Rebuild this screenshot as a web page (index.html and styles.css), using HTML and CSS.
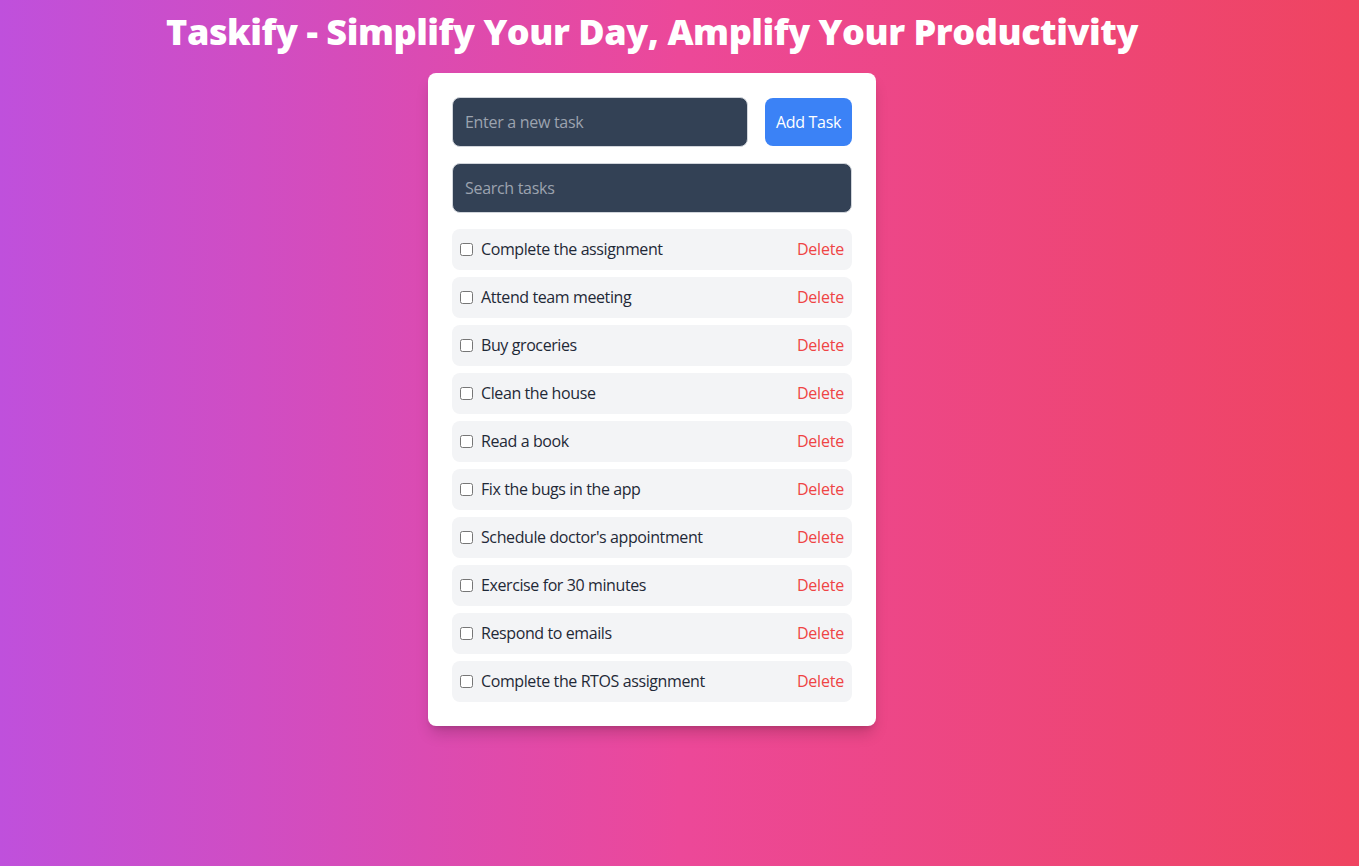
FILE: index.html
```html
<!DOCTYPE html>
<html lang="en">
<head>
<meta charset="utf-8">
<title>Taskify</title>
<link rel="stylesheet" href="styles.css">
</head>
<body>
<div class="page">
  <h1 class="title">Taskify - Simplify Your Day, Amplify Your Productivity</h1>
  <div class="card">
    <div class="add-row">
      <input class="field grow" type="text" placeholder="Enter a new task">
      <button class="add-btn">Add Task</button>
    </div>
    <input class="field search" type="text" placeholder="Search tasks">
    <ul class="list">
      <li class="item"><label class="left"><input type="checkbox" class="check"><span>Complete the assignment</span></label><button class="del">Delete</button></li>
      <li class="item"><label class="left"><input type="checkbox" class="check"><span>Attend team meeting</span></label><button class="del">Delete</button></li>
      <li class="item"><label class="left"><input type="checkbox" class="check"><span>Buy groceries</span></label><button class="del">Delete</button></li>
      <li class="item"><label class="left"><input type="checkbox" class="check"><span>Clean the house</span></label><button class="del">Delete</button></li>
      <li class="item"><label class="left"><input type="checkbox" class="check"><span>Read a book</span></label><button class="del">Delete</button></li>
      <li class="item"><label class="left"><input type="checkbox" class="check"><span>Fix the bugs in the app</span></label><button class="del">Delete</button></li>
      <li class="item"><label class="left"><input type="checkbox" class="check"><span>Schedule doctor's appointment</span></label><button class="del">Delete</button></li>
      <li class="item"><label class="left"><input type="checkbox" class="check"><span>Exercise for 30 minutes</span></label><button class="del">Delete</button></li>
      <li class="item"><label class="left"><input type="checkbox" class="check"><span>Respond to emails</span></label><button class="del">Delete</button></li>
      <li class="item"><label class="left"><input type="checkbox" class="check"><span>Complete the RTOS assignment</span></label><button class="del">Delete</button></li>
    </ul>
  </div>
</div>
</body>
</html>
```
FILE: styles.css
```css
* { box-sizing: border-box; }
html, body { margin: 0; padding: 0; height: 100%; }
body {
  font-family: "Open Sans", "Noto Sans", sans-serif;
  background: linear-gradient(to right, #bf50dc 0%, #ec4899 50%, #ef4460 100%);
  color: #1f2937;
}
.page {
  width: 1304px;
  display: flex;
  flex-direction: column;
  align-items: center;
  padding-top: 12px;
}
.title {
  margin: 0 0 21px;
  font-size: 36px;
  line-height: 40px;
  font-weight: 800;
  letter-spacing: -0.45px;
  color: #fff;
  white-space: nowrap;
}
.card {
  width: 448px;
  background: #fff;
  border-radius: 8px;
  padding: 24px;
  box-shadow: 0 10px 15px -3px rgba(0,0,0,0.18), 0 4px 6px -4px rgba(0,0,0,0.18);
}
.add-row {
  display: flex;
  gap: 17px;
}
.field {
  display: block;
  height: 50px;
  padding: 12px;
  font: inherit;
  font-size: 16px;
  line-height: 24px;
  letter-spacing: -0.3px;
  background: #334155;
  color: #fff;
  border: 1px solid #d1d5db;
  border-radius: 8px;
  outline: none;
}
.field::placeholder { color: #9ca3af; }
.grow { flex: 1; min-width: 0; }
.search { width: 100%; margin-top: 16px; }
.add-btn {
  width: 87px;
  height: 48px;
  margin-top: 1px;
  padding: 0;
  font: inherit;
  font-size: 16px;
  letter-spacing: -0.3px;
  background: #3b82f6;
  color: #fff;
  border: none;
  border-radius: 8px;
}
.list {
  list-style: none;
  margin: 16px 0 0;
  padding: 0;
  display: flex;
  flex-direction: column;
  gap: 8px;
}
.item {
  display: flex;
  align-items: center;
  justify-content: space-between;
  height: 41px;
  padding: 0 8px 1px;
  background: #f3f4f6;
  border-radius: 8px;
  font-size: 16px;
  letter-spacing: -0.4px;
}
.item + .item { margin-top: -1px; }
.left { display: flex; align-items: center; }
.check { width: 13px; height: 13px; margin: 0 8px 0 0; }
.del {
  font: inherit;
  font-size: 16px;
  letter-spacing: -0.2px;
  color: #ef4444;
  background: none;
  border: none;
  padding: 0;
}
```
